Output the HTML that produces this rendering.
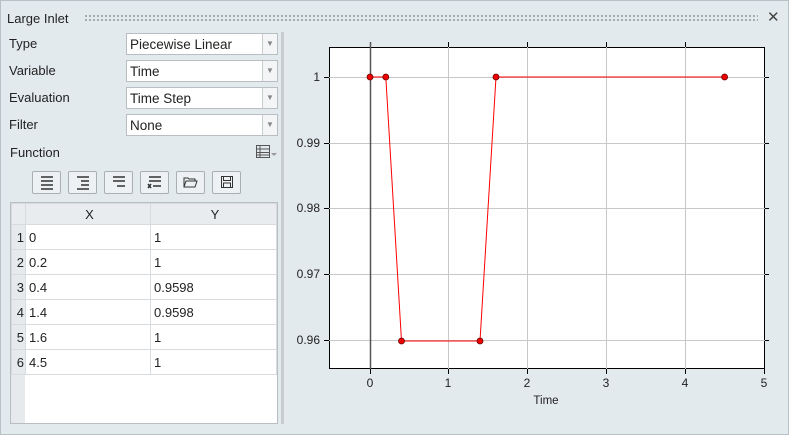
<!DOCTYPE html>
<html><head><meta charset="utf-8"><style>
*{box-sizing:border-box;margin:0;padding:0}
body{width:789px;height:435px;background:#e3eaee;font-family:"Liberation Sans",Arial,sans-serif;font-size:13px;color:#222;position:relative;overflow:hidden}
.frame{position:absolute;left:0;top:0;width:789px;height:435px;border:1px solid #b9c1c6}
.abs{position:absolute}
.lbl{position:absolute;left:9px;font-size:13px}
.combo{position:absolute;left:126px;width:152px;height:22px;background:#fff;border:1px solid #b8bec2}
.combo span{position:absolute;left:3px;top:3px;font-size:13.5px}
.combo .ar{position:absolute;right:0;top:0;width:15px;height:20px;border-left:1px solid #c8cdd0;background:#f3f5f6;color:#888;font-size:8px;text-align:center;line-height:20px}
.btn{position:absolute;top:171px;width:29px;height:23px;border:1px solid #a9b0b4;border-radius:2px;background:#eef1f3}
table{position:absolute;left:11px;top:203px;border-collapse:collapse;background:#fff}
td{height:25px;border:1px solid #d8dcde;font-size:13px;padding-left:3px}
td.n{background:#e6eaed;padding:0 1px 0 0;text-align:right}
</style></head><body>
<div class="frame"></div>
<div class="abs" style="left:7px;top:11px;font-size:13px">Large Inlet</div>
<div class="abs" style="left:84px;top:14px;width:674px;height:8px;background-image:radial-gradient(circle,#8f979c 0.8px,transparent 1px);background-size:4px 4px"></div>
<div class="abs" style="left:767px;top:8px;font-size:15px;color:#444">✕</div>
<div class="abs" style="left:281px;top:32px;width:3px;height:392px;background:#c7cdd1"></div>

<div class="lbl" style="top:36px">Type</div>
<div class="combo" style="top:33px"><span>Piecewise Linear</span><div class="ar">▼</div></div>
<div class="lbl" style="top:63px">Variable</div>
<div class="combo" style="top:60px"><span>Time</span><div class="ar">▼</div></div>
<div class="lbl" style="top:90px">Evaluation</div>
<div class="combo" style="top:87px"><span>Time Step</span><div class="ar">▼</div></div>
<div class="lbl" style="top:117px">Filter</div>
<div class="combo" style="top:114px"><span>None</span><div class="ar">▼</div></div>
<div class="lbl" style="top:145px;left:10px">Function</div>
<svg class="abs" style="left:255px;top:144px" width="24" height="16"><rect x="1.5" y="1.5" width="13" height="12" fill="none" stroke="#555"/><path d="M1 5h14M1 8.5h14M1 11h14M5 2v12" stroke="#555"/><path d="M16 9h6l-3 3z" fill="#999"/></svg>

<div class="btn" style="left:32px"><svg width="27" height="21"><path d="M8 5h12M8 9h12M8 13h12M8 17h12" stroke="#333" stroke-width="1.5"/></svg></div>
<div class="btn" style="left:68px"><svg width="27" height="21"><path d="M8 5h12M12 9h8M12 13h8M8 17h12" stroke="#333" stroke-width="1.5"/></svg></div>
<div class="btn" style="left:104px"><svg width="27" height="21"><path d="M8 5h12M8 9h12M12 14h8" stroke="#333" stroke-width="1.5"/></svg></div>
<div class="btn" style="left:140px"><svg width="27" height="21"><path d="M8 5h12M8 9h12M12 14h8M7 12l3 4M10 12l-3 4" stroke="#333" stroke-width="1.5"/></svg></div>
<div class="btn" style="left:176px"><svg width="27" height="21"><path d="M7 15V6h4l1 1h6v2M7 15l2-6h11l-2 6z" fill="none" stroke="#333"/></svg></div>
<div class="btn" style="left:212px"><svg width="27" height="21"><rect x="8.5" y="4.5" width="11" height="11" fill="none" stroke="#333"/><rect x="10.5" y="4.5" width="7" height="4" fill="none" stroke="#333"/><rect x="10.5" y="11" width="7" height="4.5" fill="none" stroke="#333"/></svg></div>

<div class="abs" style="left:10px;top:202px;width:268px;height:222px;background:#fff;border:1px solid #b8bec2"></div>
<div class="abs" style="left:11px;top:224px;width:14px;height:199px;background:#e6eaed"></div>
<table>
<tr style="background:#e8ecef"><td style="width:14px;height:21px"></td><td style="width:125px;height:21px;text-align:center">X</td><td style="width:126px;height:21px;text-align:center">Y</td></tr>
<tr><td class="n">1</td><td>0</td><td>1</td></tr>
<tr><td class="n">2</td><td>0.2</td><td>1</td></tr>
<tr><td class="n">3</td><td>0.4</td><td>0.9598</td></tr>
<tr><td class="n">4</td><td>1.4</td><td>0.9598</td></tr>
<tr><td class="n">5</td><td>1.6</td><td>1</td></tr>
<tr><td class="n">6</td><td>4.5</td><td>1</td></tr>
</table>

<svg class="abs" style="left:0;top:0" width="789" height="435" font-family="Liberation Sans,Arial,sans-serif" font-size="12" fill="#222">
<rect x="329.5" y="47.5" width="435" height="321" fill="#fff" stroke="#000"/>
<g stroke="#c8c8c8">
<path d="M448.5 47V369M527.5 47V369M606.5 47V369M685.5 47V369"/>
<path d="M329 77.5H765M329 143.5H765M329 208.5H765M329 274.5H765M329 340.5H765"/>
</g>
<path d="M370.5 42V369" stroke="#555" stroke-width="1.5"/>
<g stroke="#000"><path d="M370.5 369v5M448.5 369v5M527.5 369v5M606.5 369v5M685.5 369v5M764.5 369v5M324 77.5h5M324 143.5h5M324 208.5h5M324 274.5h5M324 340.5h5M448.5 42v5M527.5 42v5M606.5 42v5M685.5 42v5M765 77.5h4M765 143.5h4M765 208.5h4M765 274.5h4M765 340.5h4"/></g>
<g text-anchor="middle"><text x="370" y="387">0</text><text x="448" y="387">1</text><text x="527" y="387">2</text><text x="606" y="387">3</text><text x="685" y="387">4</text><text x="764" y="387">5</text><text x="546" y="404" font-size="11.5">Time</text></g>
<g text-anchor="end"><text x="320" y="81">1</text><text x="320" y="147">0.99</text><text x="320" y="212">0.98</text><text x="320" y="278">0.97</text><text x="320" y="344">0.96</text></g>
<polyline points="370,77 385.8,77 401.5,341 480,341 496,77 724.6,77" fill="none" stroke="#f00"/>
<g fill="#e00" stroke="#600" stroke-width="0.8"><circle cx="370" cy="77" r="3"/><circle cx="385.8" cy="77" r="3"/><circle cx="401.5" cy="341" r="3"/><circle cx="480" cy="341" r="3"/><circle cx="496" cy="77" r="3"/><circle cx="724.6" cy="77" r="3"/></g>
</svg>
</body></html>
